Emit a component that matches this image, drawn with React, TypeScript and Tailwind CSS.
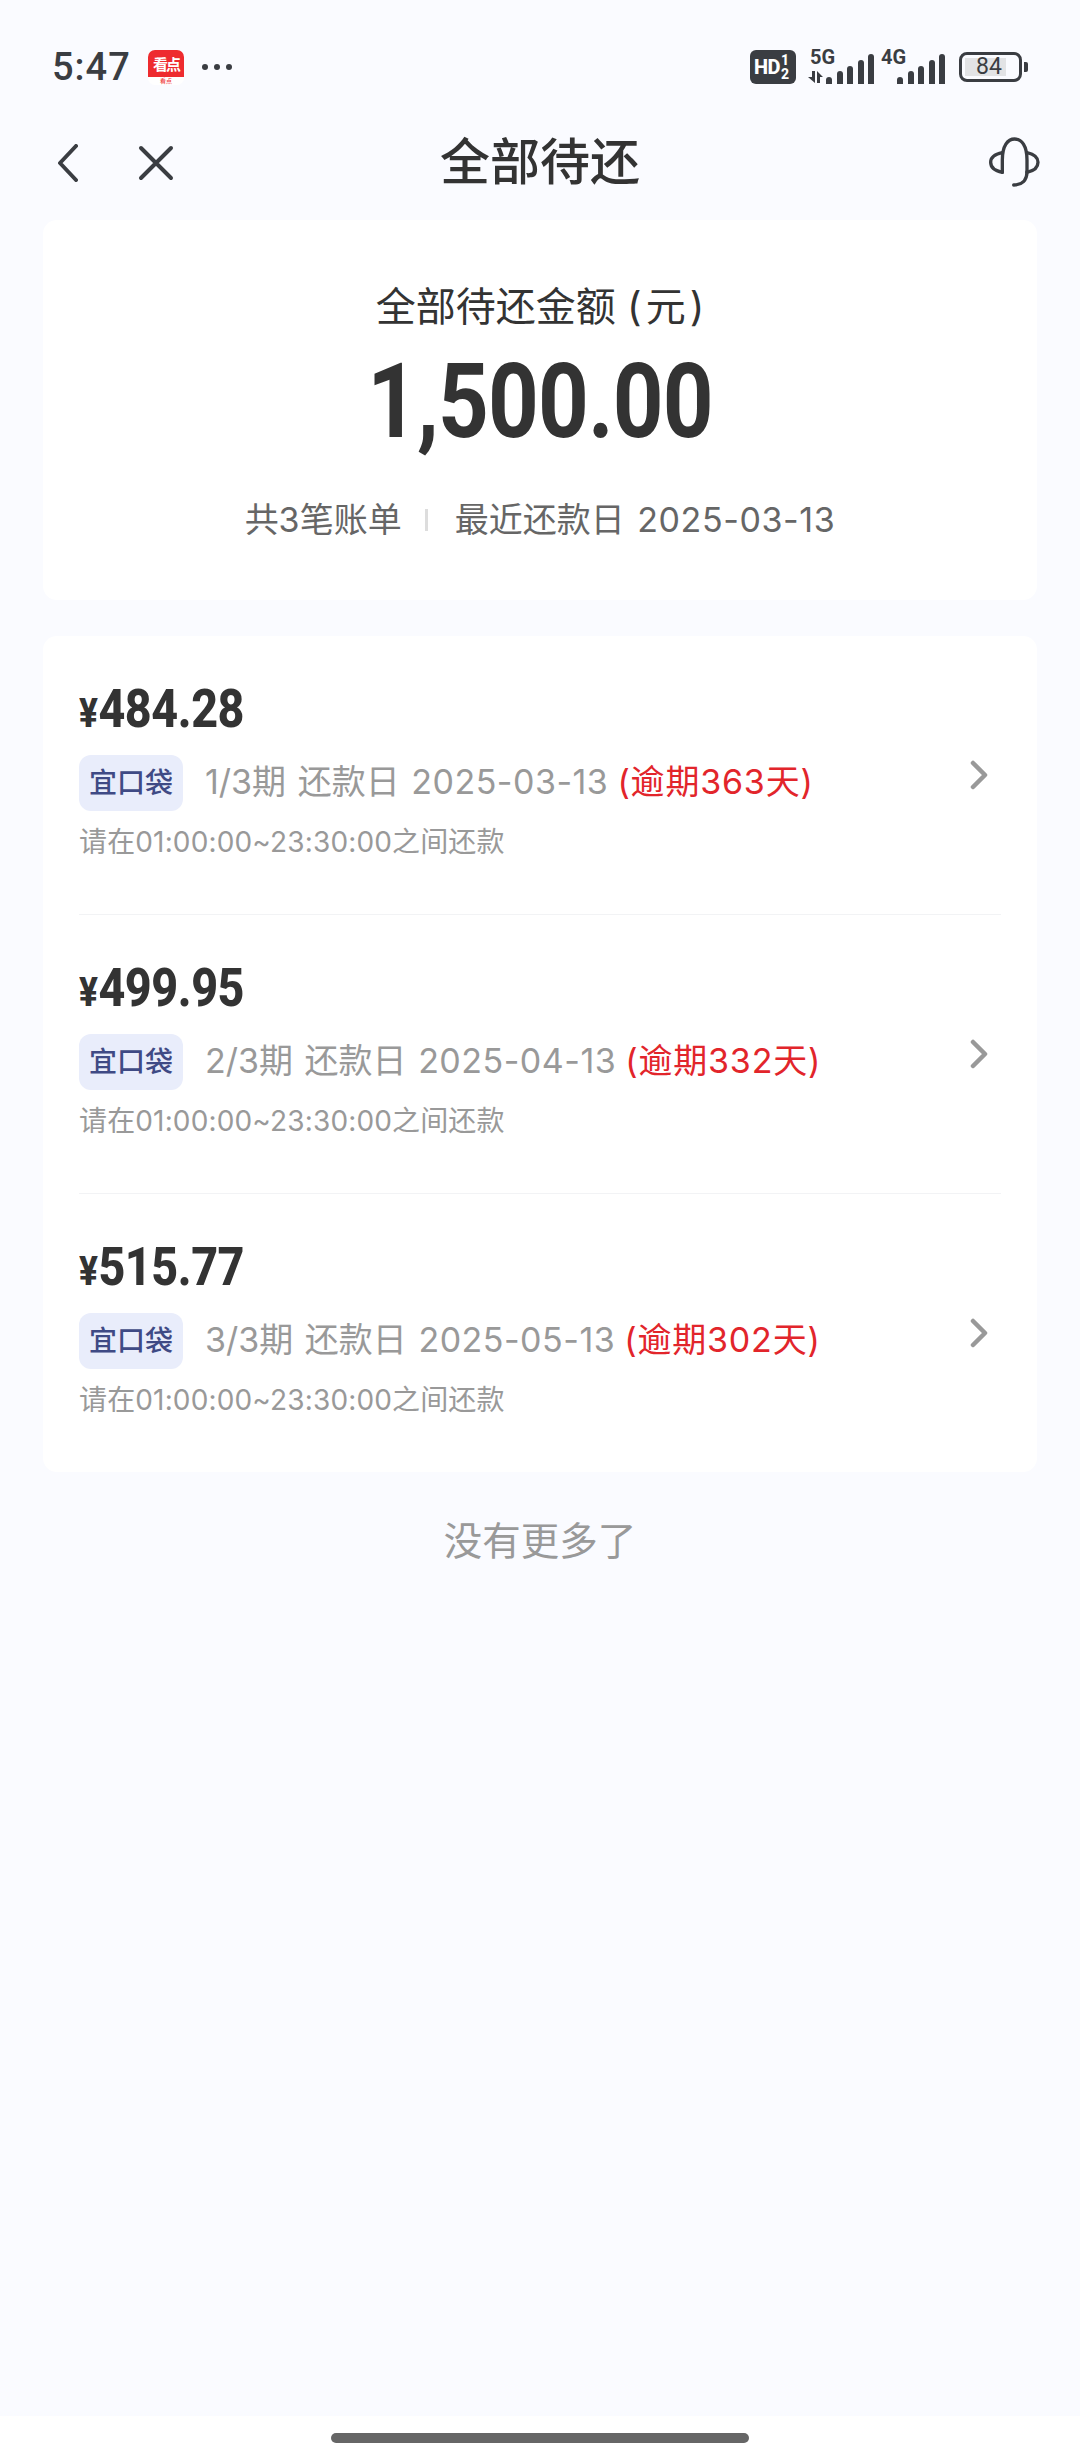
import React from "react";

const bills = [
  { amount: "484.28", period: "1/3期", date: "2025-03-13", overdue: "363" },
  { amount: "499.95", period: "2/3期", date: "2025-04-13", overdue: "332" },
  { amount: "515.77", period: "3/3期", date: "2025-05-13", overdue: "302" },
];

function Signal() {
  const bars = [7, 13, 18, 24, 30];
  return (
    <div className="flex items-end gap-[4.5px] h-[30px]">
      {bars.map((h, i) => (
        <div key={i} className="w-[6px] bg-[#3a3d42] rounded-t-[3px]" style={{ height: h }} />
      ))}
    </div>
  );
}

function StatusBar() {
  return (
    <div className="flex items-center justify-between h-[34px] mt-[50px] pl-[52px] pr-[52px] text-[#3a3d42]">
      <div className="flex items-center">
        <span className="w-[79px] text-[38px] leading-[36px] font-['Roboto'] font-medium tracking-[1px]">5:47</span>
        <div className="ml-[17px] w-[36px] h-[35px] rounded-[7px] overflow-hidden bg-white flex flex-col">
          <div className="h-[27px] bg-[#ee2b2f] text-white text-[15px] leading-[27px] font-bold text-center font-['Noto_Sans_CJK_SC',sans-serif] tracking-[-2px]">
            看点
          </div>
          <div className="flex-1 text-[#ee2b2f] text-[6px] leading-[8px] text-center font-['Noto_Sans_CJK_SC',sans-serif]">
            看点
          </div>
        </div>
        <div className="ml-[18px] flex gap-[6px]">
          <div className="w-[6px] h-[6px] rounded-full bg-[#3a3d42]" />
          <div className="w-[6px] h-[6px] rounded-full bg-[#3a3d42]" />
          <div className="w-[6px] h-[6px] rounded-full bg-[#3a3d42]" />
        </div>
      </div>
      <div className="flex items-center">
        <div className="w-[46px] h-[34px] rounded-[6px] bg-[#3a3d42] text-white flex items-center pl-[4px] font-['Roboto'] font-extrabold">
          <span className="text-[20px] leading-[20px] tracking-[-0.5px]">HD</span>
          <div className="flex flex-col items-center ml-[1px] text-[14px] leading-[14px]">
            <span>1</span>
            <span>2</span>
          </div>
        </div>
        <div className="relative ml-[11px] w-[67px] h-[34px]">
          <span className="absolute left-[3px] top-[-4px] text-[20px] leading-[22px] font-bold font-['Roboto']">5G</span>
          <svg className="absolute left-0 bottom-[1px]" width="16" height="12" viewBox="0 0 16 12" fill="#3a3d42">
            <path d="M5 0 H8 V12 L1 6 H5 Z" />
            <path d="M10 0 L16 6 H13 V12 H10 Z" />
          </svg>
          <div className="absolute right-0 bottom-0">
            <Signal />
          </div>
        </div>
        <div className="relative ml-[7px] w-[64px] h-[34px]">
          <span className="absolute left-0 top-[-4px] text-[20px] leading-[22px] font-bold font-['Roboto']">4G</span>
          <div className="absolute right-0 bottom-0">
            <Signal />
          </div>
        </div>
        <div className="ml-[14px] w-[63px] h-[30px] border-[3px] border-[#3a3d42] rounded-[8px] p-[3px]">
          <div className="w-[41px] h-[18px] bg-[#e2e3e5] text-[23px] leading-[18px] font-['Roboto'] whitespace-nowrap pl-[11px]">
            84
          </div>
        </div>
        <div className="ml-[2px] w-[4px] h-[10px] rounded-r-[2px] bg-[#3a3d42]" />
      </div>
    </div>
  );
}

function NavBar() {
  return (
    <div className="grid grid-cols-[1fr_auto_1fr] items-center h-[65px] mt-[46px] mb-[25px] px-[38px]">
      <div className="flex items-center pl-[20px]">
        <svg width="20" height="38" viewBox="0 0 20 38" fill="none" stroke="#3a3d42" strokeWidth="4" strokeLinecap="round" strokeLinejoin="round">
          <path d="M18 2 L2 19 L18 36" />
        </svg>
        <svg className="ml-[60px]" width="36" height="36" viewBox="0 0 36 36" fill="none" stroke="#3a3d42" strokeWidth="4" strokeLinecap="round">
          <path d="M3 3 L33 33 M33 3 L3 33" />
        </svg>
      </div>
      <div className="text-[50px] leading-[65px] font-medium text-[#333]">全部待还</div>
      <div className="flex justify-end">
        <svg width="55" height="55" viewBox="800 340 165 165" fill="none" stroke="#3a3d42" strokeWidth="10" strokeLinecap="round" strokeLinejoin="round">
          <path d="M846 452 V415 C846 372 862 352 883 352 C904 352 920 372 920 415 V450" />
          <path d="M846 393 C822 398 811 410 811 422 C811 438 825 448 846 452" />
          <path d="M920 393 C942 398 953 410 953 422 C953 438 940 448 920 452" />
          <path d="M920 450 C920 475 905 490 880 490" />
        </svg>
      </div>
    </div>
  );
}

function SummaryCard() {
  return (
    <div className="mx-[43px] h-[380px] bg-white rounded-[14px] flex flex-col items-center pt-[65px]">
      <div className="h-[44px] text-[40px] leading-[44px] text-[#333]">
        全部待还金额 (<span className="mx-[4px]">元</span>)
      </div>
      <div className="mt-[20px] h-[105px] text-[103px] leading-[105px] font-bold text-[#333] font-['Roboto'] scale-x-[0.86] tracking-[-1px]">
        1,500.00
      </div>
      <div className="mt-[44px] h-[44px] flex items-center text-[#666] text-[34px] leading-[44px]">
        <span>共3笔账单</span>
        <div className="ml-[23px] mr-[27px] w-[3px] h-[22px] bg-[#ddd]" />
        <span className="[word-spacing:3px]">
          最近还款日 <span className="tracking-[0.6px]">2025-03-13</span>
        </span>
      </div>
    </div>
  );
}

function BillRow({ bill, last }: { bill: (typeof bills)[number]; last: boolean }) {
  return (
    <div className={last ? "mx-[36px] h-[278px] flex items-center" : "mx-[36px] h-[279px] flex items-center border-b border-[#f2f3f5]"}>
      <div className="flex-1 h-full pt-[47px]">
        <div className="h-[52px] flex items-baseline font-['Roboto'] font-extrabold text-[#333] origin-left scale-x-[0.88] tracking-[-0.5px]">
          <span className="text-[40px] leading-[52px]">¥</span>
          <span className="text-[53px] leading-[52px] ml-[1px]">{bill.amount}</span>
        </div>
        <div className="mt-[20px] h-[56px] flex items-center">
          <div className="w-[104px] h-[56px] rounded-[12px] bg-[#e9edfb] text-[#3f4a85] text-[28px] leading-[56px] text-center font-medium">
            宜口袋
          </div>
          <span className="ml-[22px] text-[34px] leading-[44px] text-[#999] pb-[2px] [word-spacing:2px]">
            {bill.period} 还款日 <span className="tracking-[0.5px]">{bill.date}</span>
          </span>
          <span className="ml-[9px] text-[34px] leading-[44px] text-[#e2252b] pb-[2px] tracking-[0.8px]">(逾期{bill.overdue}天)</span>
        </div>
        <div className="mt-[13px] h-[36px] text-[28px] leading-[36px] text-[#999] tracking-[0.15px]">请在01:00:00~23:30:00之间还款</div>
      </div>
      <svg className="mr-[13px] shrink-0" width="18" height="30" viewBox="0 0 18 30" fill="none" stroke="#999" strokeWidth="4.5" strokeLinecap="round" strokeLinejoin="round">
        <path d="M3 3 L15 15 L3 27" />
      </svg>
    </div>
  );
}

export default function App() {
  return (
    <div className="w-[1080px] h-[2460px] bg-[#fafbff] flex flex-col font-['Inter','Noto_Sans_CJK_SC',sans-serif]">
      <StatusBar />
      <NavBar />
      <SummaryCard />
      <div className="mx-[43px] mt-[36px] h-[836px] bg-white rounded-[14px]">
        {bills.map((b, i) => (
          <BillRow key={b.date} bill={b} last={i === bills.length - 1} />
        ))}
      </div>
      <div className="mt-[47px] h-[44px] text-[38.5px] leading-[44px] text-[#999] text-center">没有更多了</div>
      <div className="mt-auto h-[44px] bg-white pt-[17px]">
        <div className="mx-auto w-[418px] h-[10px] rounded-full bg-[#666]" />
      </div>
    </div>
  );
}
